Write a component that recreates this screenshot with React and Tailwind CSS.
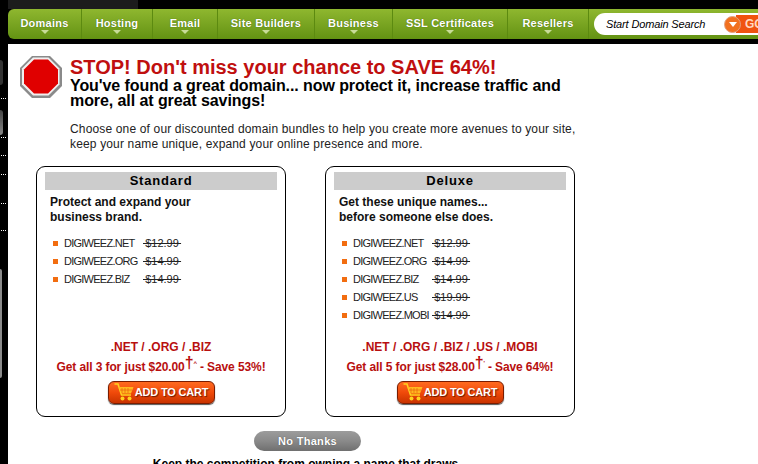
const arial = "font-['Liberation_Sans',Arial,sans-serif]";

const navItems = [
  ["Domains", "w-[74px]"],
  ["Hosting", "w-[71px]"],
  ["Email", "w-[65px]"],
  ["Site Builders", "w-[97px]"],
  ["Business", "w-[78px]"],
  ["SSL Certificates", "w-[115px]"],
  ["Resellers", "w-[81px]"],
];

function Cart() {
  return (
    <svg width="20" height="19" viewBox="0 0 20 19" className="shrink-0" fill="none">
      <path d="M0.5 1 H4 L7.5 12 H17" stroke="#ffd21f" strokeWidth="1.6" />
      <path d="M5 4 H19.5 L17 10.5 H7.2 Z" fill="#ffb81f" />
      <path d="M8 5 V10 M11 5 V10 M14 5 V10 M6 7 H18" stroke="#e8590c" strokeWidth="0.6" />
      <circle cx="8.5" cy="15.5" r="2" fill="#ffd21f" />
      <circle cx="15.5" cy="15.5" r="2" fill="#ffd21f" />
    </svg>
  );
}

function StopSign() {
  return (
    <svg width="42" height="42" viewBox="0 0 42 42" className="shrink-0">
      <polygon points="12,0 30,0 42,12 42,30 30,42 12,42 0,30 0,12" fill="#8a8a8a" />
      <polygon points="13,1.5 28.5,1.5 39.5,12.5 39.5,28.5 28.5,39.5 13,39.5 2,28.5 2,12.5" fill="#f0f0f0" />
      <polygon points="14,3.5 28,3.5 38,13.5 38,27.5 28,37.5 14,37.5 4,27.5 4,13.5" fill="#e00000" />
    </svg>
  );
}

function Dots() {
  return (
    <div className="h-[4px] pl-px flex items-center gap-px">
      <span className="w-px h-px bg-white" />
      <span className="w-px h-px bg-white" />
      <span className="w-px h-px bg-white" />
    </div>
  );
}

function Card({ title, tagline, rows, tlds, offer, save, sup }) {
  return (
    <div className="w-[250px] h-[251px] border border-black rounded-[9px] bg-white px-2 pt-[5px] pb-[12px] flex flex-col items-stretch">
      <div className="h-[18px] bg-[#cccccc] text-center text-[13px] leading-[18px] font-bold tracking-[0.8px] text-black">{title}</div>
      <div className="mt-[5px] pl-[5px] text-[12px] leading-[15px] font-bold text-[#111]">
        {tagline.map((t) => <div key={t}>{t}</div>)}
      </div>
      <div className="mt-[9px] pl-[8px] flex flex-col">
        {rows.map(([d, p]) => (
          <div key={d} className="h-[18px] flex items-center text-[11px] text-[#222]">
            <span className="w-[5px] h-[5px] bg-[#f26d10] mr-[6px] mt-px" />
            <span className="w-[79px] whitespace-nowrap tracking-[-0.75px]">{d}</span>
            <span className="line-through text-[#222] whitespace-pre">{"\u2009" + p + "\u2009"}</span>
          </div>
        ))}
      </div>
      <div className="mt-auto flex flex-col items-center">
        <div className="text-[12px] leading-[15px] font-bold text-[#b80f0f]">{tlds}</div>
        <div className="h-[20px] flex items-end text-[12px] leading-[15px] font-bold tracking-[-0.1px] text-[#b80f0f] whitespace-nowrap">
          <span>{offer}</span>
          <span className="text-[16px] leading-[16px] self-start">†</span>
          <span className="text-[6px] leading-[16px] self-start mr-[3px]">{sup}</span>
          <span>{save}</span>
        </div>
        <button className="mt-[6px] w-[107px] h-[23px] rounded-[6px] border border-[#7a1c00] bg-gradient-to-b from-[#ff6a1f] via-[#f04a0a] to-[#c93300] shadow-[0_1px_1px_#555] flex items-center justify-center gap-px text-white text-[11px] font-bold [text-shadow:1px_1px_1px_#6b1800]">
          <Cart />
          <span className="whitespace-nowrap tracking-[-0.2px]">ADD TO CART</span>
        </button>
      </div>
    </div>
  );
}

export default function App() {
  return (
    <div className={`${arial} w-[758px] h-[464px] overflow-hidden bg-black flex flex-col`}>
      <div className="h-[9px] shrink-0">
        <div className="w-[130px] h-full ml-[8px] bg-[#1c1c1c]" />
      </div>

      <nav className="ml-[8px] h-[30px] shrink-0 rounded-l-[6px] bg-gradient-to-b from-[#8fb72f] to-[#639212] flex overflow-hidden">
        {navItems.map(([label, w]) => (
          <div key={label} className={`${w} shrink-0 border-r border-[#5c8a10] flex flex-col items-center pt-[8px] text-white text-[11px] font-bold tracking-[0.25px] leading-[13px] [text-shadow:0_0_1px_#3d5c08]`}>
            <span className="whitespace-nowrap">{label}</span>
            <span className="w-0 h-0 border-x-[4px] border-x-transparent border-t-[4px] border-t-[#c8dc98]" />
          </div>
        ))}
        <div className="ml-[5px] mt-[4px] h-[22px] flex-1 rounded-l-[11px] bg-white flex items-center overflow-hidden">
          <span className="ml-[12px] w-[118px] shrink-0 text-[11px] italic tracking-[-0.15px] text-black whitespace-nowrap">Start Domain Search</span>
          <div className="h-full flex-1 min-w-0 flex items-center">
            <div className="w-[17px] h-[17px] rounded-full bg-[#f2701f] border border-[#e0a080] flex items-center justify-center relative z-10 shrink-0">
              <span className="w-0 h-0 border-x-[4px] border-x-transparent border-t-[5px] border-t-white" />
            </div>
            <div className="-ml-[5px] flex-1 min-w-0 h-[18px] bg-[#f0530f] text-[#ffd9c0] text-[12px] font-bold leading-[18px] pl-[9px] overflow-hidden whitespace-nowrap">GO</div>
          </div>
        </div>
      </nav>

      <div className="h-[5px] shrink-0" />

      <div className="flex-1 min-h-0 flex">
        <aside className="w-[8px] shrink-0 flex flex-col">
          <div className="mt-[16px] h-[25px] w-[3px] rounded-r-full bg-[#333333]" />
          <div className="mt-[11px]"><Dots /></div>
          <div className="mt-[10px] h-[25px] w-[3px] rounded-r-full bg-gradient-to-b from-[#444444] to-[#888888]" />
          <Dots />
          <div className="mt-[14px]"><Dots /></div>
          <div className="mt-[15px]"><Dots /></div>
          <div className="mt-[25px]"><Dots /></div>
          <div className="mt-[23px]"><Dots /></div>
          <div className="mt-[37px] h-[109px] w-[2px] rounded-r-[2px] bg-[#8a8a8a]" />
        </aside>

        <main className="flex-1 min-w-0 bg-white overflow-hidden">
          <div className="pt-[12px] pl-[12px] flex gap-[8px]">
            <StopSign />
            <div className="w-[510px]">
              <h1 className="text-[20px] leading-[22px] font-bold text-[#c00f0f] whitespace-nowrap">STOP! Don't miss your chance to SAVE 64%!</h1>
              <p className="text-[16px] leading-[15px] font-bold text-black tracking-[-0.08px]">You've found a great domain... now protect it, increase traffic and<br />more, all at great savings!</p>
              <p className="mt-[14px] text-[12px] leading-[15px] text-[#222] tracking-[0.155px] whitespace-nowrap">Choose one of our discounted domain bundles to help you create more avenues to your site,<br />keep your name unique, expand your online presence and more.</p>
            </div>
          </div>

          <div className="mt-[14px] ml-[28px] flex gap-[39px]">
            <Card
              title="Standard"
              tagline={["Protect and expand your", "business brand."]}
              rows={[["DIGIWEEZ.NET", "$12.99"], ["DIGIWEEZ.ORG", "$14.99"], ["DIGIWEEZ.BIZ", "$14.99"]]}
              tlds=".NET / .ORG / .BIZ"
              offer="Get all 3 for just $20.00"
              sup="^"
              save="- Save 53%!"
            />
            <Card
              title="Deluxe"
              tagline={["Get these unique names...", "before someone else does."]}
              rows={[["DIGIWEEZ.NET", "$12.99"], ["DIGIWEEZ.ORG", "$14.99"], ["DIGIWEEZ.BIZ", "$14.99"], ["DIGIWEEZ.US", "$19.99"], ["DIGIWEEZ.MOBI", "$14.99"]]}
              tlds=".NET / .ORG / .BIZ / .US / .MOBI"
              offer="Get all 5 for just $28.00"
              sup="'"
              save="- Save 64%!"
            />
          </div>

          <div className="mt-[14px] ml-[246px] w-[107px] h-[20px] rounded-full bg-gradient-to-b from-[#9c9c9c] via-[#8a8a8a] to-[#6f6f6f] text-white text-[11px] font-bold leading-[20px] text-center tracking-[0.3px] [text-shadow:0_0_1px_#444]">No Thanks</div>
          <div className="mt-[6px] ml-[28px] w-[539px] text-center text-[12px] leading-[15px] font-bold text-black whitespace-nowrap">Keep the competition from owning a name that draws</div>
        </main>
      </div>
    </div>
  );
}
